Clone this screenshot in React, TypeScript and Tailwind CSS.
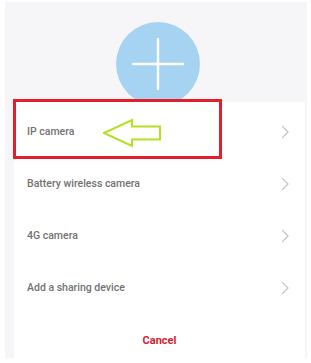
import React from 'react';

const items = ['IP camera', 'Battery wireless camera', '4G camera', 'Add a sharing device'];

const Chevron: React.FC = () => (
    <svg width="9" height="14" viewBox="0 0 9 14" fill="none">
        <path d="M1.5 1.5 L7 7 L1.5 12.5" stroke="#c4c4c4" strokeWidth="1.2" strokeLinecap="round" strokeLinejoin="round" />
    </svg>
);

export default function App() {
    return (
        <div className="w-[311px] h-[363px] bg-white overflow-hidden" style={{ fontFamily: 'Roboto, "Liberation Sans", sans-serif' }}>
            <div className="relative ml-[5px] mt-[2px] w-[302px] h-[356px] bg-[#f6f6f8] flex flex-col">
                {/* add button */}
                <div className="ml-[111px] mt-[20px] w-[84px] h-[84px] rounded-full bg-[#a6d3f2] flex items-center justify-center">
                    <svg width="52" height="52" viewBox="0 0 52 52">
                        <path d="M26 1 V51 M1 26 H51" stroke="#ffffff" strokeWidth="2.4" strokeLinecap="round" />
                    </svg>
                </div>

                {/* sheet */}
                <div className="relative -mt-[4px] ml-[9px] w-[291px] h-[256px] bg-white pt-[4px] flex flex-col">
                    {items.map((label) => (
                        <div key={label} className="h-[52px] flex items-center justify-between pl-[13px] pr-[15px]">
                            <span className="text-[10.5px] font-medium text-[#727272]">{label}</span>
                            <Chevron />
                        </div>
                    ))}
                    <div className="flex-1 flex items-start justify-center pt-[19px]">
                        <span className="text-[11px] font-bold text-[#d6202c]">Cancel</span>
                    </div>
                </div>

                {/* annotation */}
                <div className="absolute left-[8px] top-[97px] w-[209px] h-[60px] border-[3px] border-[#e21f2b]" />
                <svg className="absolute left-[98px] top-[116px]" width="60" height="30" viewBox="0 0 60 30">
                    <path d="M1 15 L29 2 L29 8.5 L57 8.5 L57 21.5 L29 21.5 L29 28 Z" fill="none" stroke="#b6e022" strokeWidth="2" strokeLinejoin="miter" />
                </svg>
            </div>
        </div>
    );
}
